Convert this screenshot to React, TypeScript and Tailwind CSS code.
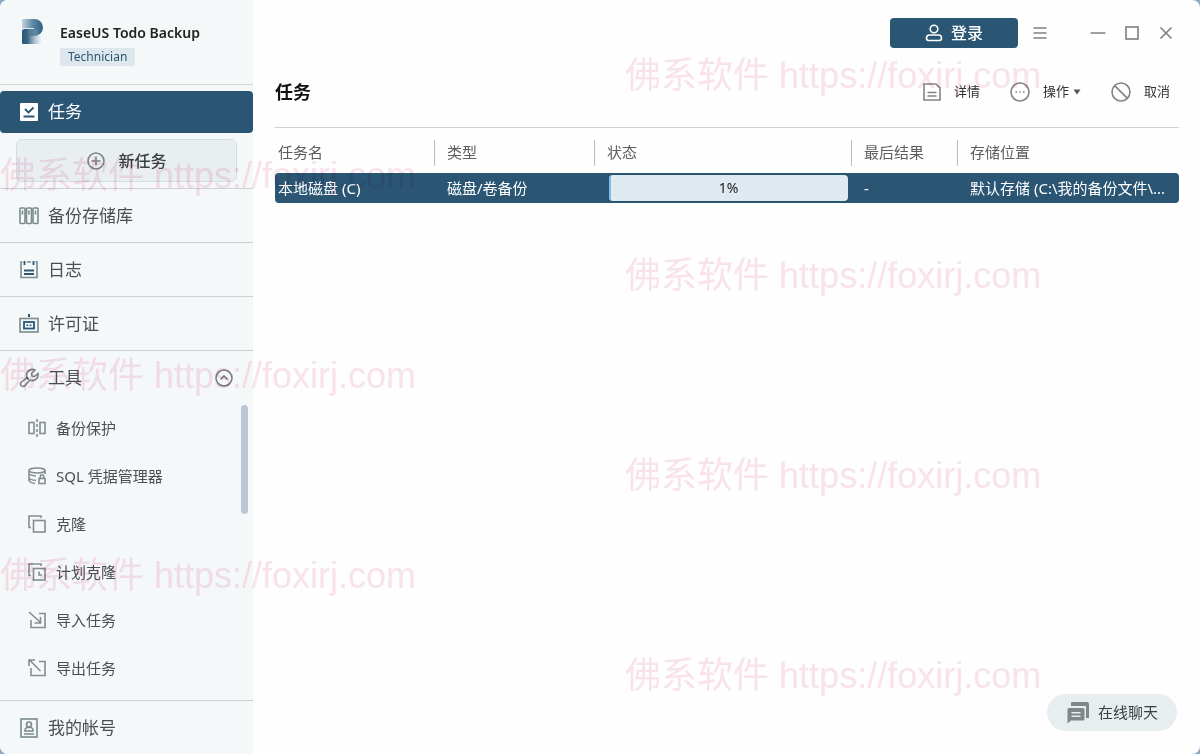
import type { ReactNode } from "react"

function Icon({ size = 20, children }: { size?: number; children: ReactNode }) {
  return (
    <svg
      width={size}
      height={size}
      viewBox={`0 0 ${size} ${size}`}
      fill="none"
      stroke="currentColor"
      strokeWidth="1.6"
      className="shrink-0"
      aria-hidden="true"
    >
      {children}
    </svg>
  )
}

function Logo() {
  return (
    <svg width="22" height="26" viewBox="0 0 22 26" className="shrink-0" aria-hidden="true">
      <defs>
        <linearGradient id="bowl" x1="0" y1="0" x2="1" y2="0">
          <stop offset="0" stopColor="#c3d3df" />
          <stop offset="0.5" stopColor="#5f8aa6" />
          <stop offset="1" stopColor="#2f5f80" />
        </linearGradient>
        <linearGradient id="stem" x1="0" y1="0" x2="1" y2="0">
          <stop offset="0" stopColor="#2a5674" />
          <stop offset="0.3" stopColor="#376584" />
          <stop offset="1" stopColor="#8fadc2" stopOpacity="0.1" />
        </linearGradient>
      </defs>
      <path d="M1 0H12.5A8.5 8.5 0 0 1 12.5 17H8V9H0V1Q0 0 1 0Z" fill="url(#bowl)" />
      <path d="M2.5 10H13Q16 10 16 12V16.500H19V24Q19 25 18 25H1Q0 25 0 24V12.5Q0 10 2.5 10Z" fill="url(#stem)" />
      <path d="M0 9.500H12" stroke="#dfe8ee" strokeWidth="1" />
    </svg>
  )
}

const menu = [
  {
    label: "备份存储库",
    icon: (
      <Icon>
        {[1, 7.5, 14].map((x) => (
          <g key={x}>
            <rect x={x} y="2" width="5" height="15.5" rx="1" />
            <path d={`M${x + 2.5} 4.5v4`} />
          </g>
        ))}
      </Icon>
    ),
  },
  {
    label: "日志",
    icon: (
      <Icon>
        <path d="M3.5 2H2V17.5H18V2H16.5M8 2H12" />
        <path d="M5.5 1V5M14.5 1V5M5 10.5H15M5 14H15" stroke="#2a5674" strokeWidth="1.8" />
      </Icon>
    ),
  },
  {
    label: "许可证",
    icon: (
      <Icon>
        <rect x="1" y="4.5" width="18" height="13.5" />
        <g stroke="#2a5674">
          <rect x="5" y="8" width="10" height="6.5" strokeWidth="1.8" />
          <path d="M10 0V3" strokeWidth="2" />
          <path d="M7.5 11.3H9.3M10.7 11.3H12.5" />
        </g>
      </Icon>
    ),
  },
]

const tools = [
  {
    label: "备份保护",
    icon: (
      <Icon size={18}>
        <rect x="1" y="3.5" width="5" height="11" />
        <rect x="12" y="3.5" width="5" height="11" />
        <path d="M9 0V18" strokeDasharray="3 2" />
      </Icon>
    ),
  },
  {
    label: "SQL 凭据管理器",
    icon: (
      <Icon size={18}>
        <ellipse cx="9" cy="3.5" rx="8" ry="2.5" />
        <path d="M1 3.5V6.5Q2 8.5 8 9M17 3.5V7M1 6.5V11Q2 13 8 13.3M1 11V13.5Q2 16 7 16.5" />
        <rect x="11" y="11.5" width="6" height="5" />
        <path d="M12.3 11V9.5a1.7 1.7 0 0 1 3.4 0V11" />
      </Icon>
    ),
  },
  {
    label: "克隆",
    icon: (
      <Icon size={18}>
        <path d="M3 12.5H1V1H13V3" />
        <rect x="5.5" y="5.5" width="11.5" height="11.5" />
      </Icon>
    ),
  },
  {
    label: "计划克隆",
    icon: (
      <Icon size={18}>
        <path d="M3 12.5H1V1H13V3" />
        <rect x="5.5" y="5.5" width="11.5" height="11.5" />
        <path d="M11 8.5V12H14" />
      </Icon>
    ),
  },
  {
    label: "导入任务",
    icon: (
      <Icon size={18}>
        <path d="M11 2.5H17V16.5H3V9M1 1L12.5 11.5M6.5 12H12.5V6" />
      </Icon>
    ),
  },
  {
    label: "导出任务",
    icon: (
      <Icon size={18}>
        <path d="M11 2.5H17V16.5H3V9M1.5 1L12.5 12M1 7V1H7" />
      </Icon>
    ),
  },
]

function Sidebar() {
  return (
    <aside className="flex w-[253px] shrink-0 flex-col bg-[#f5f8f8] text-[#4a4f52]">
      <div className="flex h-[85px] gap-4 border-b border-[#d9d3d2] pt-[19px] pl-[22px]">
        <Logo />
        <div className="flex flex-col items-start gap-[5px] pt-1">
          <h1 className="text-sm leading-5 font-semibold text-[#222]">EaseUS Todo Backup</h1>
          <span className="bg-[#dfe7ee] px-2 text-xs leading-[18px] text-[#2a5674]">Technician</span>
        </div>
      </div>

      <nav className="flex min-h-0 flex-1 flex-col">
        <a
          href="#tasks"
          className="mt-[6px] flex h-[42px] shrink-0 items-center gap-[9px] rounded bg-[#2a5674] pl-[19px] text-[17px] text-white"
        >
          <Icon>
            <rect x="1" y="1" width="18" height="18" rx="1" fill="#fff" stroke="none" />
            <path d="M6 7L9.5 10.5L14.5 5.5M4.5 14.5H15.5" stroke="#2a5674" strokeWidth="1.8" />
          </Icon>
          任务
        </a>
        <button
          type="button"
          className="mx-4 my-[6px] flex h-[43px] shrink-0 items-center justify-center gap-3 rounded-md border border-[#d3dde4] bg-[#e9eef1] text-base font-medium text-[#3a3f42]"
        >
          <Icon>
            <circle cx="10" cy="10" r="8" stroke="#7f8688" />
            <path d="M10 5.5V14.5M5.5 10H14.5" stroke="#7f8688" />
          </Icon>
          新任务
        </button>

        {menu.map((item) => (
          <a
            key={item.label}
            href={`#${item.label}`}
            className="flex h-[54px] shrink-0 items-center gap-[9px] border-t border-[#cdd1d2] pl-[19px] text-[17px]"
          >
            <span className="text-[#7b8a8c]">{item.icon}</span>
            {item.label}
          </a>
        ))}

        <button
          type="button"
          aria-expanded="true"
          className="flex h-[54px] shrink-0 items-center gap-[9px] border-t border-[#cdd1d2] pr-5 pl-[19px] text-[17px]"
        >
          <Icon>
            <path
              d="M2 14.5L8 9.5Q6.5 5 10 2.5Q13 0.5 16 2L12.5 5.5L13 8L15.5 8.5L19 5.5Q19.5 9 17 11.2Q14.5 13.5 11 12L5.5 18Q3.5 19 2 17.5Q0.8 16 2 14.5Z"
              stroke="#7b7f82"
            />
            <path d="M7.5 9.5L9.5 11.5" stroke="#2a5674" />
          </Icon>
          <span className="flex-1 text-left">工具</span>
          <Icon size={18}>
            <circle cx="9" cy="9" r="8" stroke="#7b7f82" />
            <path d="M5.5 10.5L9 7L12.5 10.5" stroke="#7b7f82" />
          </Icon>
        </button>

        <div className="flex min-h-0 flex-1 justify-between overflow-hidden">
          <ul>
            {tools.map((tool) => (
              <li key={tool.label}>
                <a href={`#${tool.label}`} className="flex h-12 items-center gap-[10px] pl-7 text-[15px]">
                  <span className="text-[#858d8e]">{tool.icon}</span>
                  {tool.label}
                </a>
              </li>
            ))}
          </ul>
          <div className="mt-px mr-[5px] h-[109px] w-[7px] rounded-full bg-[#bac7d4]" />
        </div>
      </nav>

      <a
        href="#account"
        className="flex h-[54px] shrink-0 items-center gap-[9px] border-t border-[#cdd1d2] pl-[19px] text-[17px]"
      >
        <span className="text-[#7b8a8c]">
          <Icon>
            <rect x="2" y="1" width="16" height="18" />
            <circle cx="10" cy="6.5" r="2.5" />
            <path d="M6 13V11.5Q6.5 9.5 8.5 9.5H11.5Q13.5 9.5 14 11.5V13ZM5 16H15" />
          </Icon>
        </span>
        我的帐号
      </a>
    </aside>
  )
}

function TitleBar() {
  const control = "flex h-8 w-[34px] items-center justify-center text-[#7c8082]"
  return (
    <div className="flex h-[66px] items-center justify-end pr-[17px]">
      <button
        type="button"
        className="mr-[5px] flex h-[30px] w-32 items-center justify-center gap-2 rounded bg-[#2a5674] text-base font-medium text-white"
      >
        <Icon size={18}>
          <circle cx="9" cy="5" r="3.8" />
          <path d="M4.5 11H13.5Q16.5 11 16.5 14Q16.5 16.5 14.5 16.5H3.5Q1.5 16.5 1.5 14Q1.5 11 4.5 11Z" />
        </Icon>
        登录
      </button>
      <button type="button" aria-label="菜单" className={`${control} mr-6`}>
        <Icon size={14}>
          <path d="M0.5 2H13.5M0.5 7H13.5M0.5 12H13.5" />
        </Icon>
      </button>
      <button type="button" aria-label="最小化" className={control}>
        <Icon size={16}>
          <path d="M0.5 8H15.5" />
        </Icon>
      </button>
      <button type="button" aria-label="最大化" className={control}>
        <Icon size={14}>
          <rect x="1" y="1" width="12" height="12" />
        </Icon>
      </button>
      <button type="button" aria-label="关闭" className={control}>
        <Icon size={14}>
          <path d="M1.5 1.5L12.5 12.5M12.5 1.5L1.5 12.5" />
        </Icon>
      </button>
    </div>
  )
}

function Toolbar() {
  const action = "flex items-center gap-[13px]"
  return (
    <div className="mr-[21px] ml-[22px] flex h-[62px] items-center justify-between border-b border-[#cfd1d2] pr-[9px] pb-[10px]">
      <h2 className="text-lg leading-6 font-bold text-[#111]">任务</h2>
      <div className="flex gap-[30px] text-[13px] text-[#333]">
        <button type="button" className={action}>
          <span className="text-[#808486]">
            <Icon size={18}>
              <path d="M1 1H13L17 5V17H1ZM4.5 9.5H13.5M4.5 13H13.5" />
            </Icon>
          </span>
          详情
        </button>
        <button type="button" aria-haspopup="menu" className={action}>
          <span className="text-[#808486]">
            <Icon>
              <circle cx="10" cy="10" r="9" />
              <path d="M5.5 10H7M9.3 10H10.7M13 10H14.5" />
            </Icon>
          </span>
          <span className="flex items-center gap-1">
            操作
            <svg width="8" height="6" viewBox="0 0 8 6" aria-hidden="true">
              <path d="M0.5 0.5H7.5L4 5.5Z" fill="#555" />
            </svg>
          </span>
        </button>
        <button type="button" className={action}>
          <span className="text-[#808486]">
            <Icon>
              <circle cx="10" cy="10" r="9" />
              <path d="M3.6 3.6L16.4 16.4" />
            </Icon>
          </span>
          取消
        </button>
      </div>
    </div>
  )
}

function TaskTable() {
  const progress = 1
  const head = "h-[45px] p-0 pt-1 text-left font-normal"
  const headCell = "flex h-[26px] items-center border-l border-[#b9bdbf] pl-3"
  return (
    <div className="mr-[21px] ml-[22px]">
      <table className="w-full table-fixed border-separate border-spacing-0 text-[15px]">
        <colgroup>
          <col className="w-[159px]" />
          <col className="w-40" />
          <col />
          <col className="w-[106px]" />
          <col className="w-[222px]" />
        </colgroup>
        <thead className="text-[#5a5e60]">
          <tr>
            <th className={head}>
              <div className="flex h-[26px] items-center pl-[3px]">任务名</div>
            </th>
            <th className={head}>
              <div className={headCell}>类型</div>
            </th>
            <th className={head}>
              <div className={headCell}>状态</div>
            </th>
            <th className={head}>
              <div className={headCell}>最后结果</div>
            </th>
            <th className={head}>
              <div className={headCell}>存储位置</div>
            </th>
          </tr>
        </thead>
        <tbody>
          <tr className="h-[30px] bg-[#2a5674] text-white">
            <td className="rounded-l py-0 pr-0 pl-[3px]">本地磁盘 (C)</td>
            <td className="py-0 pr-0 pl-[13px]">磁盘/卷备份</td>
            <td className="py-0 pr-[3px] pl-[15px]">
              <div
                role="progressbar"
                aria-label="状态"
                aria-valuenow={progress}
                className="relative flex h-[26px] items-center justify-center overflow-hidden rounded-sm bg-[#dfe9f0] text-sm text-[#222]"
              >
                <div className="absolute inset-y-0 left-0 bg-[#7cc0ea]" style={{ width: `${progress}%` }} />
                {progress}%
              </div>
            </td>
            <td className="py-0 pr-0 pl-[13px]">-</td>
            <td className="truncate rounded-r py-0 pr-3 pl-[13px]">默认存储 (C:\我的备份文件\...</td>
          </tr>
        </tbody>
      </table>
    </div>
  )
}

function Watermark() {
  const column = "flex flex-col gap-[152px] text-4xl leading-[48px] whitespace-nowrap"
  const left = [0, 1, 2]
  const right = [0, 1, 2, 3]
  return (
    <div
      aria-hidden="true"
      className="pointer-events-none absolute inset-0 flex gap-[209px] overflow-hidden font-['Liberation_Sans','Noto_Sans_CJK_SC',sans-serif] text-[#f9e3ec] mix-blend-multiply"
    >
      <div className={`${column} pt-[152px]`}>
        {left.map((i) => (
          <span key={i}>佛系软件 https://foxirj.com</span>
        ))}
      </div>
      <div className={`${column} pt-[52px]`}>
        {right.map((i) => (
          <span key={i}>佛系软件 https://foxirj.com</span>
        ))}
      </div>
    </div>
  )
}

export default function App() {
  return (
    <div className="h-screen bg-[#8fa9c2] font-['Noto_Sans','Noto_Sans_CJK_SC',sans-serif]">
      <div className="relative isolate flex h-full overflow-hidden rounded-lg bg-[#fefefe]">
        <Sidebar />
        <main className="min-w-0 flex-1">
          <TitleBar />
          <Toolbar />
          <TaskTable />
        </main>
        <button
          type="button"
          className="absolute right-[23px] bottom-[23px] flex h-[37px] w-[130px] items-center gap-2 rounded-full bg-[#e8edf0] pl-5 text-[15px] text-[#3a3f42]"
        >
          <svg width="23" height="22" viewBox="0 0 23 22" fill="#7f8887" aria-hidden="true">
            <path d="M5 0H20Q22 0 22 2V16H19V5Q19 4 18 4H4V1Q4 0 5 0Z" />
            <path
              fillRule="evenodd"
              d="M2 6H16Q17.5 6 17.5 7.5V17Q17.5 18.5 16 18.5H4L0.5 21.5V7.5Q0.5 6 2 6ZM4.5 10V11.5H13.5V10ZM4.5 13.5V15H13.5V13.5Z"
            />
          </svg>
          在线聊天
        </button>
        <Watermark />
      </div>
    </div>
  )
}
